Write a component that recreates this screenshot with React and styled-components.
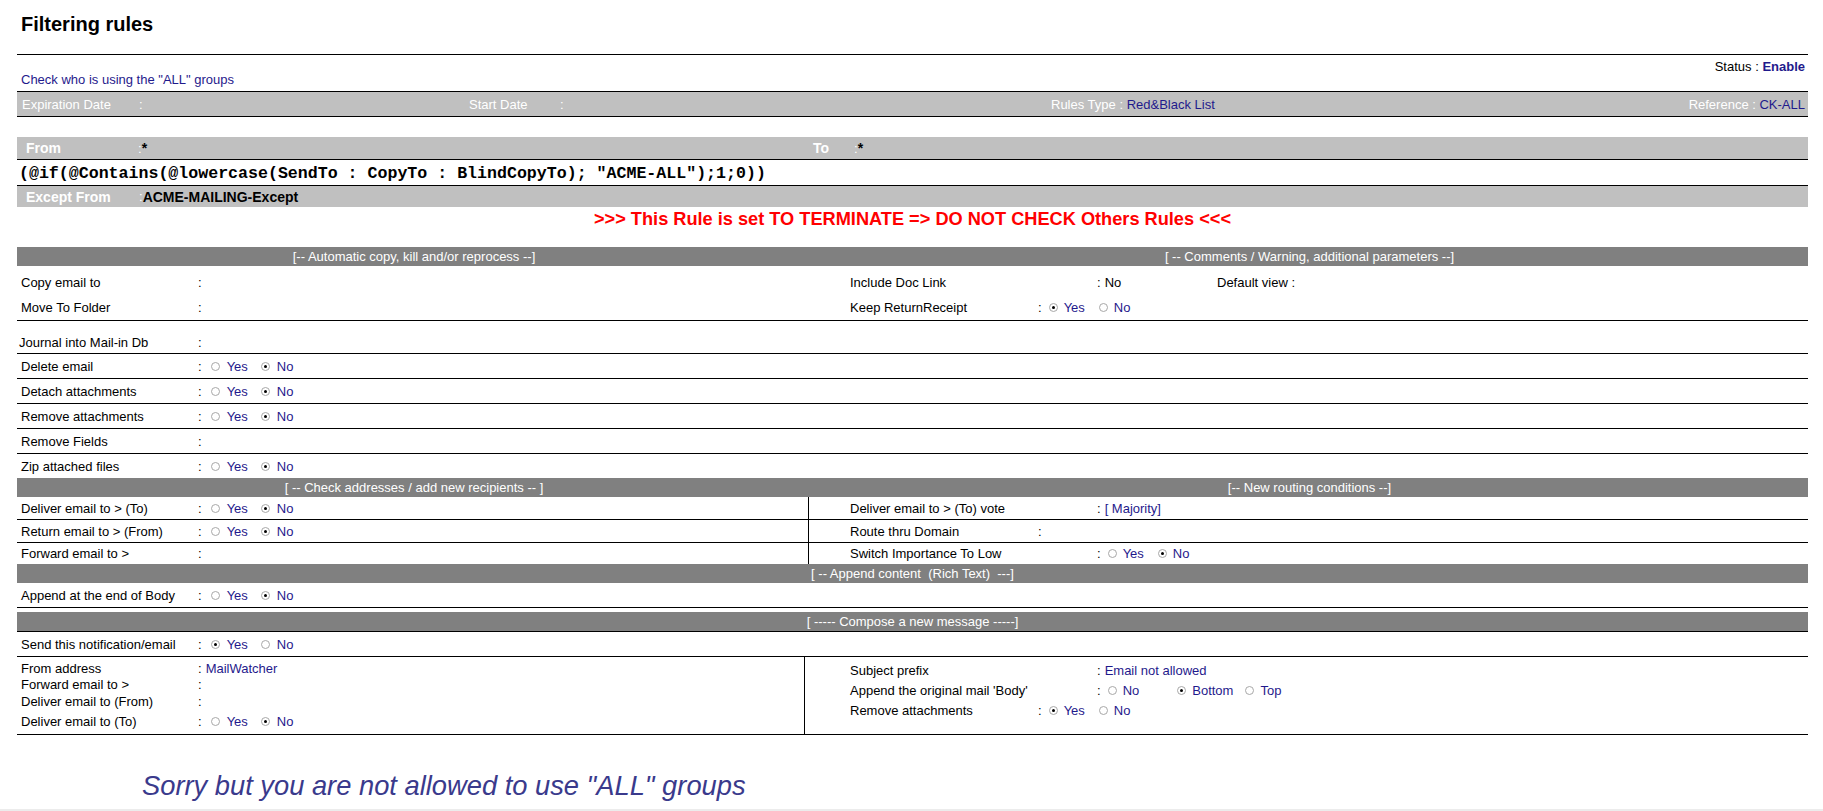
import React from 'react';
import styled, { createGlobalStyle, css } from 'styled-components';

const NAVY = '#1f1a8c';

const GlobalStyle = createGlobalStyle`
  html, body { margin: 0; padding: 0; background: #fff; }
  body {
    font-family: "Liberation Sans", Arial, sans-serif;
    font-size: 13px;
    color: #000;
  }
`;

const Page = styled.div`
  width: 1823px;
  height: 809px;
  box-sizing: border-box;
  padding: 0 15px 0 17px;
  overflow: hidden;
`;

const BottomEdge = styled.div`
  height: 2px;
  background: #ececec;
`;

const Title = styled.h1`
  margin: 0;
  height: 54px;
  box-sizing: border-box;
  padding: 13px 0 0 4px;
  font-size: 20px;
  line-height: 23px;
  font-weight: bold;
`;

const Rule = styled.div`
  border-top: 1px solid #000;
`;

const TopInfo = styled.div`
  padding: 5px 3px 5px 4px;
  line-height: 13px;
`;

const StatusLine = styled.div`
  text-align: right;
`;

const Strong = styled.b`
  color: ${NAVY};
`;

const CheckLink = styled.div`
  color: ${NAVY};
`;

const InfoBar = styled.div`
  display: flex;
  align-items: center;
  height: 24px;
  background: #c0c0c0;
  color: #fff;
  border-top: 1px solid #000;
  border-bottom: 1px solid #000;
  padding: 0 3px 0 5px;
  white-space: nowrap;
`;

const BarCell = styled.div`
  display: flex;
  align-items: center;
  width: ${p => (p.$w ? `${p.$w}px` : 'auto')};
  flex: ${p => (p.$w ? 'none' : 1)};
  justify-content: ${p => (p.$right ? 'flex-end' : 'flex-start')};
`;

const BarLabel = styled.span`
  display: inline-block;
  width: ${p => p.$w}px;
  font-weight: ${p => (p.$bold ? 'bold' : 'normal')};
  font-size: ${p => (p.$bold ? '14px' : '13px')};
`;

const BarValue = styled.span`
  color: ${p => (p.$dark ? '#000' : NAVY)};
  font-weight: ${p => (p.$dark ? 'bold' : 'normal')};
  font-size: ${p => (p.$dark ? '14px' : '13px')};
`;

const AddrBar = styled.div`
  display: flex;
  align-items: center;
  height: ${p => p.$h || 21}px;
  margin-top: ${p => p.$top || 0}px;
  background: #c0c0c0;
  color: #fff;
  padding-left: 9px;
  border-bottom: ${p => (p.$line ? '1px solid #000' : 'none')};
`;

const Formula = styled.div`
  height: 25px;
  line-height: 27px;
  padding-left: 2px;
  border-bottom: 1px solid #000;
  font-family: "Liberation Mono", "Courier New", monospace;
  font-weight: bold;
  font-size: 16.6px;
  white-space: pre;
`;

const Warning = styled.div`
  height: 40px;
  line-height: 24px;
  text-align: center;
  color: #ff0000;
  font-weight: bold;
  font-size: 18.2px;
`;

const SectionBar = styled.div`
  display: flex;
  align-items: center;
  height: 19px;
  background: #808080;
  color: #fff;
  white-space: pre;
  border-bottom: ${p => (p.$line ? '1px solid #000' : 'none')};
`;

const BarHalf = styled.div`
  width: ${p => (p.$w ? `${p.$w}px` : 'auto')};
  flex: ${p => (p.$w ? 'none' : 1)};
  text-align: center;
`;

const Block = styled.div`
  padding-top: ${p => p.$top || 0}px;
`;

const Row = styled.div`
  display: flex;
  height: ${p => p.$h || 24}px;
  border-bottom: ${p => (p.$line ? '1px solid #000' : 'none')};
  white-space: nowrap;
`;

const Cell = styled.div`
  display: flex;
  flex-direction: ${p => (p.$stack ? 'column' : 'row')};
  align-items: ${p => (p.$stack ? 'stretch' : p.$bottom ? 'flex-end' : 'center')};
  box-sizing: border-box;
  width: ${p => (p.$w ? `${p.$w}px` : 'auto')};
  flex: ${p => (p.$w ? 'none' : 1)};
  padding-left: ${p => p.$pad ?? 4}px;
  padding-top: ${p => p.$ptop || 0}px;
  padding-bottom: ${p => p.$pbot || 0}px;
  border-right: ${p => (p.$divider ? '1px solid #000' : 'none')};
`;

const Line = styled.div`
  display: flex;
  align-items: center;
  height: ${p => p.$h || 20}px;
`;

const Label = styled.span`
  display: inline-block;
  flex: none;
  width: ${p => p.$w || 177}px;
`;

const Val = styled.span`
  display: inline-flex;
  align-items: center;
  color: ${p => (p.$plain ? '#000' : NAVY)};
  width: ${p => (p.$w ? `${p.$w}px` : 'auto')};
`;

const Colon = styled.span`
  color: #000;
  margin-right: ${p => p.$gap ?? 4}px;
`;

const Opt = styled.span`
  display: inline-flex;
  align-items: center;
  margin-right: ${p => p.$gap}px;
`;

const Dot = styled.span`
  position: relative;
  display: inline-block;
  width: 9px;
  height: 9px;
  box-sizing: border-box;
  border-radius: 50%;
  border: 1px solid #a8a8a8;
  background: #fff;
  margin-right: ${p => p.$gap}px;
  ${p => p.$on && css`
    &::after {
      content: '';
      position: absolute;
      left: 2px;
      top: 2px;
      width: 3px;
      height: 3px;
      border-radius: 50%;
      background: #000;
    }
  `}
`;

const Sorry = styled.div`
  margin-top: 35px;
  padding-left: 125px;
  font-size: 27.3px;
  line-height: 31px;
  font-style: italic;
  color: #3a3a8c;
`;

// wide: spacing used in the left column, tighter one on the right
const Choice = ({ opts, on, gaps = [], wide }) => (
  <Val>
    <Colon $gap={wide ? 9 : 7}>:</Colon>
    {opts.map((o, i) => (
      <Opt key={o} $gap={gaps[i] ?? (wide ? 13 : 14)}>
        <Dot $on={i === on} $gap={wide ? 7 : 6} />
        {o}
      </Opt>
    ))}
  </Val>
);

const Text = ({ children, plain }) => (
  <Val $plain={plain}>
    <Colon>:</Colon>
    {children}
  </Val>
);

const YesNo = ({ yes, wide }) => <Choice opts={['Yes', 'No']} on={yes ? 0 : 1} wide={wide} />;

const App = () => (
  <>
    <GlobalStyle />
    <Page>
      <Title>Filtering rules</Title>
      <Rule />
      <TopInfo>
        <StatusLine>
          Status : <Strong>Enable</Strong>
        </StatusLine>
        <CheckLink>Check who is using the "ALL" groups</CheckLink>
      </TopInfo>

      <InfoBar>
        <BarCell $w={447}>
          <BarLabel $w={117}>Expiration Date</BarLabel>:
        </BarCell>
        <BarCell $w={582}>
          <BarLabel $w={91}>Start Date</BarLabel>:
        </BarCell>
        <BarCell>
          Rules Type :&nbsp;<BarValue>Red&amp;Black List</BarValue>
        </BarCell>
        <BarCell $right>
          Reference :&nbsp;<BarValue>CK-ALL</BarValue>
        </BarCell>
      </InfoBar>

      <AddrBar $top={20} $h={22} $line>
        <BarCell $w={787}>
          <BarLabel $w={112} $bold>From</BarLabel>:<BarValue $dark>*</BarValue>
        </BarCell>
        <BarCell>
          <BarLabel $w={41} $bold>To</BarLabel>:<BarValue $dark>*</BarValue>
        </BarCell>
      </AddrBar>
      <Formula>(@if(@Contains(@lowercase(SendTo : CopyTo : BlindCopyTo); "ACME-ALL");1;0))</Formula>
      <AddrBar>
        <BarLabel $w={113} $bold>Except From</BarLabel>:<BarValue $dark>ACME-MAILING-Except</BarValue>
      </AddrBar>

      <Warning>&gt;&gt;&gt; This Rule is set TO TERMINATE =&gt; DO NOT CHECK Others Rules &lt;&lt;&lt;</Warning>

      <SectionBar>
        <BarHalf $w={794}>[-- Automatic copy, kill and/or reprocess --]</BarHalf>
        <BarHalf>[ -- Comments / Warning, additional parameters --]</BarHalf>
      </SectionBar>
      <Block $top={4}>
        <Row $h={25}>
          <Cell $w={794}>
            <Label>Copy email to</Label>
            <Colon>:</Colon>
          </Cell>
          <Cell $pad={39}>
            <Label $w={247}>Include Doc Link</Label>
            <Val $plain $w={120}>
              <Colon>:</Colon>No
            </Val>
            <Label $w={100}>Default view :</Label>
          </Cell>
        </Row>
        <Row $h={25} $line>
          <Cell $w={794}>
            <Label>Move To Folder</Label>
            <Colon>:</Colon>
          </Cell>
          <Cell $pad={39}>
            <Label $w={188}>Keep ReturnReceipt</Label>
            <YesNo yes />
          </Cell>
        </Row>
      </Block>
      <Row $h={32} $line>
        <Cell $w={794} $bottom $pbot={3} $pad={2}>
          <Label $w={179}>Journal into Mail-in Db</Label>
          <Colon>:</Colon>
        </Cell>
      </Row>
      <Row $line>
        <Cell>
          <Label>Delete email</Label>
          <YesNo wide />
        </Cell>
      </Row>
      <Row $line>
        <Cell>
          <Label>Detach attachments</Label>
          <YesNo wide />
        </Cell>
      </Row>
      <Row $line>
        <Cell>
          <Label>Remove attachments</Label>
          <YesNo wide />
        </Cell>
      </Row>
      <Row $line>
        <Cell>
          <Label>Remove Fields</Label>
          <Colon>:</Colon>
        </Cell>
      </Row>
      <Row>
        <Cell>
          <Label>Zip attached files</Label>
          <YesNo wide />
        </Cell>
      </Row>

      <SectionBar>
        <BarHalf $w={794}>[ -- Check addresses / add new recipients -- ]</BarHalf>
        <BarHalf>[-- New routing conditions --]</BarHalf>
      </SectionBar>
      <Row $h={22} $line>
        <Cell $w={792} $divider>
          <Label>Deliver email to &gt; (To)</Label>
          <YesNo wide />
        </Cell>
        <Cell $pad={41}>
          <Label $w={247}>Deliver email to &gt; (To) vote</Label>
          <Text>[ Majority]</Text>
        </Cell>
      </Row>
      <Row $h={22} $line>
        <Cell $w={792} $divider>
          <Label>Return email to &gt; (From)</Label>
          <YesNo wide />
        </Cell>
        <Cell $pad={41}>
          <Label $w={188}>Route thru Domain</Label>
          <Colon>:</Colon>
        </Cell>
      </Row>
      <Row $h={21}>
        <Cell $w={792} $divider>
          <Label>Forward email to &gt;</Label>
          <Colon>:</Colon>
        </Cell>
        <Cell $pad={41}>
          <Label $w={247}>Switch Importance To Low</Label>
          <YesNo />
        </Cell>
      </Row>

      <SectionBar>
        <BarHalf>[ -- Append content  (Rich Text)  ---]</BarHalf>
      </SectionBar>
      <Row $line>
        <Cell>
          <Label>Append at the end of Body</Label>
          <YesNo wide />
        </Cell>
      </Row>

      <Block $top={4}>
        <SectionBar $line>
          <BarHalf>[ ----- Compose a new message -----]</BarHalf>
        </SectionBar>
      </Block>
      <Row $line>
        <Cell>
          <Label>Send this notification/email</Label>
          <YesNo yes wide />
        </Cell>
      </Row>
      <Row $h={77} $line>
        <Cell $w={788} $divider $stack $ptop={3}>
          <Line $h={16}>
            <Label>From address</Label>
            <Text>MailWatcher</Text>
          </Line>
          <Line $h={16}>
            <Label>Forward email to &gt;</Label>
            <Colon>:</Colon>
          </Line>
          <Line $h={18}>
            <Label>Deliver email to (From)</Label>
            <Colon>:</Colon>
          </Line>
          <Line $h={22}>
            <Label>Deliver email to (To)</Label>
            <YesNo wide />
          </Line>
        </Cell>
        <Cell $pad={45} $stack $ptop={3}>
          <Line>
            <Label $w={247}>Subject prefix</Label>
            <Text>Email not allowed</Text>
          </Line>
          <Line>
            <Label $w={247}>Append the original mail 'Body'</Label>
            <Choice opts={['No', 'Bottom', 'Top']} on={1} gaps={[38, 12, 12]} />
          </Line>
          <Line>
            <Label $w={188}>Remove attachments</Label>
            <YesNo yes />
          </Line>
        </Cell>
      </Row>

      <Sorry>Sorry but you are not allowed to use "ALL" groups</Sorry>
    </Page>
    <BottomEdge />
  </>
);

export default App;
